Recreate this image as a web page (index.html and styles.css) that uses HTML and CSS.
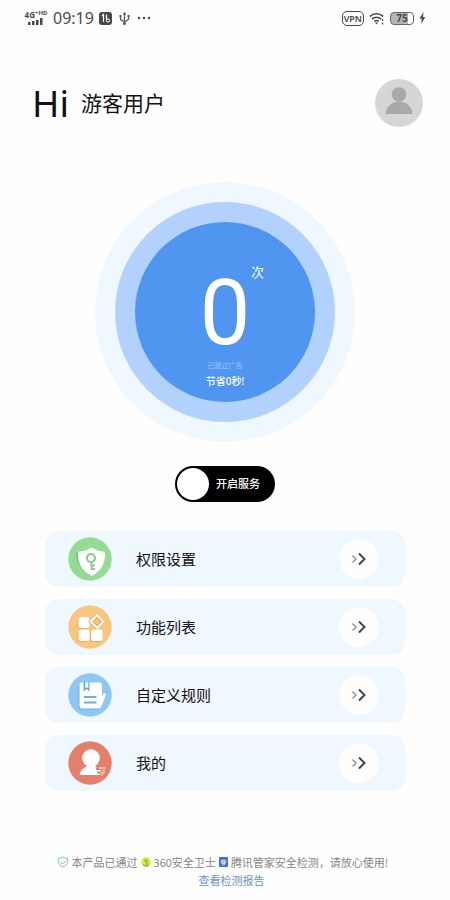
FILE: index.html
```html
<!DOCTYPE html>
<html lang="zh-CN">
<head>
<meta charset="utf-8">
<meta name="viewport" content="width=device-width, initial-scale=1">
<title>游客用户</title>
<link rel="stylesheet" href="styles.css">
</head>
<body>
<div class="status">
  <div class="status-side">
    <div class="network">
      <span class="network-label">4G<span class="network-hd">+HD</span></span>
      <svg width="16" height="7" viewBox="0 0 16 7" fill="#484848" aria-hidden="true"><path d="M0 4h2.500v3H0zM4 3h2.500v4H4zM8 2h2.500v5H8zM12 0h2.500v7H12z"/></svg>
    </div>
    <span class="time">09:19</span>
    <svg width="13" height="13" viewBox="0 0 13 13" aria-hidden="true"><rect width="13" height="13" rx="3" fill="#484848"/><path d="M3 4l1.500-1.500V10M7.500 2.500v5.500" fill="none" stroke="#fff" stroke-width="1.200"/><circle cx="9" cy="8.500" r="1.600" fill="none" stroke="#fff"/></svg>
    <svg class="usb" width="11" height="13" viewBox="0 0 11 13" fill="none" stroke="#555" aria-hidden="true"><path d="M5.500 2v9M1.500 4v3q0 1.500 4 2.500 4-1 4-2.500V4" stroke-width="1.200"/><path d="M5.500 0l2 2.500h-4zM.5 3h2v2h-2zM8.500 3h2v2h-2z" fill="#555" stroke="none"/><circle cx="5.500" cy="11.500" r="1.500" fill="#555" stroke="none"/></svg>
    <svg width="14" height="4" viewBox="0 0 14 4" fill="#484848" aria-hidden="true"><circle cx="2" cy="2" r="1.200"/><circle cx="7" cy="2" r="1.200"/><circle cx="12" cy="2" r="1.200"/></svg>
  </div>
  <div class="status-side status-right">
    <span class="vpn">VPN</span>
    <svg width="16" height="13" viewBox="0 0 16 13" fill="none" stroke="#484848" stroke-width="1.600" aria-hidden="true"><path d="M.8 4.300q6.700-5 13.400 0M3 7q4.500-3.400 9 0M5.200 9.400q2.300-1.800 4.600 0"/><path d="M6 10.500h3l-1.500 2z" fill="#484848" stroke="none"/><path d="M13.500 7v2M13.500 10.500v2" stroke-width="1.300"/></svg>
    <span class="battery">75</span>
    <svg width="7" height="12" viewBox="0 0 7 12" fill="#484848" aria-hidden="true"><path d="M4.500 0L.5 6.500h2.200L2.200 12l4-7H4z"/></svg>
  </div>
</div>

<header class="header">
  <h1 class="greeting"><span class="hi">Hi</span><span class="user">游客用户</span></h1>
  <button class="avatar" type="button" aria-label="头像">
    <svg viewBox="0 0 48 48" aria-hidden="true"><circle cx="24" cy="15.500" r="7.300" fill="#aaa8a9"/><path d="M10.500 35c.5-7 6-12.500 13.500-12.500S37 28 37.500 35z" fill="#aaa8a9"/></svg>
  </button>
</header>

<main class="main">
  <section class="ring-outer">
    <div class="ring-middle">
      <div class="disc">
        <p class="count">0<span class="unit">次</span></p>
        <p class="skipped">已跳过广告</p>
        <p class="saved">节省0秒!</p>
      </div>
    </div>
  </section>

  <label class="switch"><input class="switch-input" type="checkbox" role="switch"><span class="knob"></span><span class="switch-text">开启服务</span></label>

  <nav class="menu">
    <a class="item" href="#permissions">
      <svg class="icon" viewBox="0 0 44 44" aria-hidden="true"><circle cx="22" cy="22" r="21.700" fill="#94dc94"/><path d="M8 16q8-1 14-5 5 4 12 5 1 16-12 23Q9 32 8 16z" fill="#76bd7b"/><path d="M10 15q8-1 13.500-4.500Q29 14 37 15q1 17-13.500 24Q9 32 10 15z" fill="#fff"/><g fill="none" stroke="#8bc890" stroke-width="2"><circle cx="23" cy="21" r="4"/><path d="M23.500 25v8M24 28.500h3M24 32h3"/></g></svg>
      <span class="label">权限设置</span>
      <span class="go"><svg width="16" height="14" viewBox="0 0 16 14" fill="none" aria-hidden="true"><path d="M1.500 3.500L5 7l-3.500 3.500" stroke="#999ba3" stroke-width="1.500"/><path d="M8 1.500L13.500 7 8 12.500" stroke="#44464f" stroke-width="2"/></svg></span>
    </a>
    <a class="item" href="#features">
      <svg class="icon" viewBox="0 0 44 44" aria-hidden="true"><circle cx="22" cy="22" r="21.700" fill="#f8c77d"/><g fill="#e0ae68"><rect x="9.500" y="13" width="11" height="11" rx="3"/><rect x="9.500" y="25" width="11" height="12" rx="3"/><rect x="22" y="25" width="12" height="12" rx="3"/></g><g fill="#fff"><rect x="10.500" y="12" width="11" height="11" rx="2.500"/><rect x="10.500" y="24.500" width="11" height="11.500" rx="2.500"/><rect x="23" y="24.500" width="11.500" height="11.500" rx="2.500"/></g><path d="M28.500 9.500l7 7-7 7-7-7z" fill="#f8c77d" stroke="#d9a75f" stroke-width="2" stroke-linejoin="round"/><path d="M29 10l6.500 6.500L29 23l-6.500-6.500z" fill="none" stroke="#fff" stroke-width="1.800" stroke-linejoin="round"/><path d="M29 13l3.500 3.500L29 20l-3.500-3.500z" fill="none" stroke="#d4a15d" stroke-width=".8"/></svg>
      <span class="label">功能列表</span>
      <span class="go"><svg width="16" height="14" viewBox="0 0 16 14" fill="none" aria-hidden="true"><path d="M1.500 3.500L5 7l-3.500 3.500" stroke="#999ba3" stroke-width="1.500"/><path d="M8 1.500L13.500 7 8 12.500" stroke="#44464f" stroke-width="2"/></svg></span>
    </a>
    <a class="item" href="#rules">
      <svg class="icon" viewBox="0 0 44 44" aria-hidden="true"><circle cx="22" cy="22" r="21.700" fill="#8dc8f5"/><path d="M10.500 12h4l18 12-2 12.500H13q-2.500 0-2.500-3z" fill="#74aedd"/><path d="M13.500 9.500H31q3 0 3 3V24l1.500-3.500q2-1.500 2.500 1-2 6-4.500 11.500-.8 2.500-3.500 2.500H14q-2.500 0-2.500-2.500v-21.500q0-2 2-2z" fill="#fff"/><path d="M15.500 9v9.500l3-2.500 3 2.500V9h-1.200v6.500l-1.800-1.500-1.200 1V9z" fill="#70a9d8"/><path d="M16 24h12.500M16 29.500h12.500" stroke="#6caedd" stroke-width="1.800"/></svg>
      <span class="label">自定义规则</span>
      <span class="go"><svg width="16" height="14" viewBox="0 0 16 14" fill="none" aria-hidden="true"><path d="M1.500 3.500L5 7l-3.500 3.500" stroke="#999ba3" stroke-width="1.500"/><path d="M8 1.500L13.500 7 8 12.500" stroke="#44464f" stroke-width="2"/></svg></span>
    </a>
    <a class="item" href="#mine">
      <svg class="icon" viewBox="0 0 44 44" aria-hidden="true"><circle cx="22" cy="22" r="21.700" fill="#e37f6b"/><circle cx="23" cy="17" r="8.800" fill="#fff"/><path d="M18.500 22h9v4l2 1h-1.500v2h5v1.500h-4v2h3V34h-20.500q1-6 7-8.500z" fill="#fff"/><path d="M31 27h6.500M34.500 29.800h2.500M33 32h3.500M33 34h1.500" stroke="#fff" stroke-width="1.100"/></svg>
      <span class="label">我的</span>
      <span class="go"><svg width="16" height="14" viewBox="0 0 16 14" fill="none" aria-hidden="true"><path d="M1.500 3.500L5 7l-3.500 3.500" stroke="#999ba3" stroke-width="1.500"/><path d="M8 1.500L13.500 7 8 12.500" stroke="#44464f" stroke-width="2"/></svg></span>
    </a>
  </nav>
</main>

<footer class="footer">
  <p class="safety">
    <svg width="12" height="12" viewBox="0 0 12 12" fill="none" stroke="#8bc795" aria-hidden="true"><path d="M6 1q2 1.300 4.700 1.500Q11.500 8.500 6 11.200.5 8.500 1.300 2.500 4 2.300 6 1z"/><path d="M3.500 6l2 2 3.500-3.500"/></svg>
    <span>本产品已通过</span>
    <svg width="10" height="10" viewBox="0 0 10 10" aria-hidden="true"><circle cx="5" cy="5" r="4.700" fill="#dcea35"/><path d="M1 6.500Q4 9 8.500 6.500L7 9.500Q3 10.500 1 6.500z" fill="#83c341"/><path d="M3 4q2-2.500 4 0M5 4v2h2" fill="none" stroke="#7fae38"/></svg>
    <span>360安全卫士</span>
    <svg width="9" height="10" viewBox="0 0 9 10" aria-hidden="true"><rect width="9" height="10" rx="1" fill="#4568d2"/><path d="M1.500 2.500h6v3Q7 8 4.500 9 2 8 1.500 5.500z" fill="#8eaaf0"/><circle cx="4.500" cy="5" r="1.500" fill="none" stroke="#fff" stroke-width=".8"/></svg>
    <span>腾讯管家安全检测，请放心使用!</span>
  </p>
  <a class="report" href="#report">查看检测报告</a>
</footer>
</body>
</html>
```
FILE: styles.css
```css
* {
  box-sizing: border-box;
}

body {
  margin: 0;
  min-height: 100vh;
  display: flex;
  flex-direction: column;
  background: #fefefe;
  color: #111;
  font-family: "Noto Sans", "Noto Sans CJK SC", sans-serif;
}

p,
h1 {
  margin: 0;
  font-weight: 400;
}

.status {
  display: flex;
  justify-content: space-between;
  align-items: center;
  height: 36px;
  padding: 0 24px;
  color: #484848;
}

.status-side {
  display: flex;
  align-items: center;
  gap: 5px;
}

.network {
  display: flex;
  flex-direction: column;
  align-items: center;
  width: 24px;
}

.network-label {
  display: flex;
  font-size: 8px;
  line-height: 7px;
  font-weight: 700;
  white-space: nowrap;
}

.network-hd {
  font-size: 6px;
  line-height: 5px;
}

.time {
  font-size: 16px;
  line-height: 20px;
}

.usb {
  margin: 0 2px;
}

.vpn {
  padding: 0 1px;
  border: 1px solid #484848;
  border-radius: 5px;
  font-size: 9px;
  line-height: 13px;
  font-weight: 600;
}

.battery {
  width: 24px;
  border: 1px solid #666;
  border-radius: 4px;
  background: linear-gradient(90deg, #b5b5b5 75%, #fefefe 75%);
  font-size: 10px;
  line-height: 11px;
  font-weight: 700;
  text-align: center;
}

.header {
  display: flex;
  justify-content: space-between;
  align-items: center;
  margin-top: 43px;
  padding: 0 27px 0 32px;
}

.greeting {
  display: flex;
  align-items: center;
  gap: 12px;
}

.hi {
  font-size: 37px;
  line-height: 48px;
}

.user {
  font-size: 21px;
  line-height: 48px;
}

.avatar {
  width: 48px;
  height: 48px;
  padding: 0;
  border: 0;
  border-radius: 50%;
  background: #d8d5d6;
}

.avatar svg {
  display: block;
}

.main {
  display: flex;
  flex-direction: column;
  align-items: center;
  padding: 55px 45px 0;
}

.ring-outer {
  padding: 20px;
  border-radius: 50%;
  background: #eff7ff;
}

.ring-middle {
  padding: 20px;
  border-radius: 50%;
  background: #b2d2fd;
}

.disc {
  width: 180px;
  height: 180px;
  padding-top: 47px;
  border-radius: 50%;
  background: #5095ef;
  color: #fff;
  text-align: center;
}

.count {
  position: relative;
  font-family: Roboto, sans-serif;
  font-size: 90px;
  line-height: 90px;
}

.unit {
  position: absolute;
  top: -7px;
  left: 116px;
  font-family: "Noto Sans CJK SC", sans-serif;
  font-size: 13px;
  line-height: 20px;
}

.skipped {
  color: #9cc5fb;
  font-size: 7px;
  line-height: 14px;
}

.saved {
  font-size: 10px;
  line-height: 16px;
  font-weight: 500;
}

.switch {
  position: relative;
  display: flex;
  align-items: center;
  width: 100px;
  height: 36px;
  margin-top: 24px;
  padding: 0 2px;
  border-radius: 18px;
  background: #000;
  color: #fff;
}

.switch-input {
  position: absolute;
  inset: 0;
  width: 100%;
  height: 100%;
  margin: 0;
  opacity: 0;
}

.knob {
  width: 32px;
  height: 32px;
  border-radius: 50%;
  background: #fff;
}

.switch-text {
  margin-left: 7px;
  font-size: 11px;
  line-height: 16px;
  font-weight: 500;
}

.menu {
  display: flex;
  flex-direction: column;
  gap: 12px;
  width: 100%;
  margin-top: 29px;
}

.item {
  display: flex;
  align-items: center;
  height: 56px;
  padding: 0 26px 0 23px;
  border-radius: 14px;
  background: #eff7ff;
  color: #111;
  text-decoration: none;
}

.icon {
  width: 44px;
  height: 44px;
}

.label {
  flex: 1;
  margin-left: 24px;
  font-size: 15px;
  line-height: 24px;
}

.go {
  display: flex;
  align-items: center;
  justify-content: center;
  width: 40px;
  height: 40px;
  border-radius: 50%;
  background: #fefefe;
}

.footer {
  display: flex;
  flex-direction: column;
  align-items: center;
  margin-top: auto;
  padding-bottom: 11px;
  font-family: "Noto Sans CJK SC", sans-serif;
  font-size: 11px;
  line-height: 18px;
}

.safety {
  display: flex;
  align-items: center;
  gap: 3px;
  margin-right: 5px;
  color: #858585;
  white-space: nowrap;
}

.report {
  margin-left: 13px;
  color: #6c93c9;
  text-decoration: none;
}
```
